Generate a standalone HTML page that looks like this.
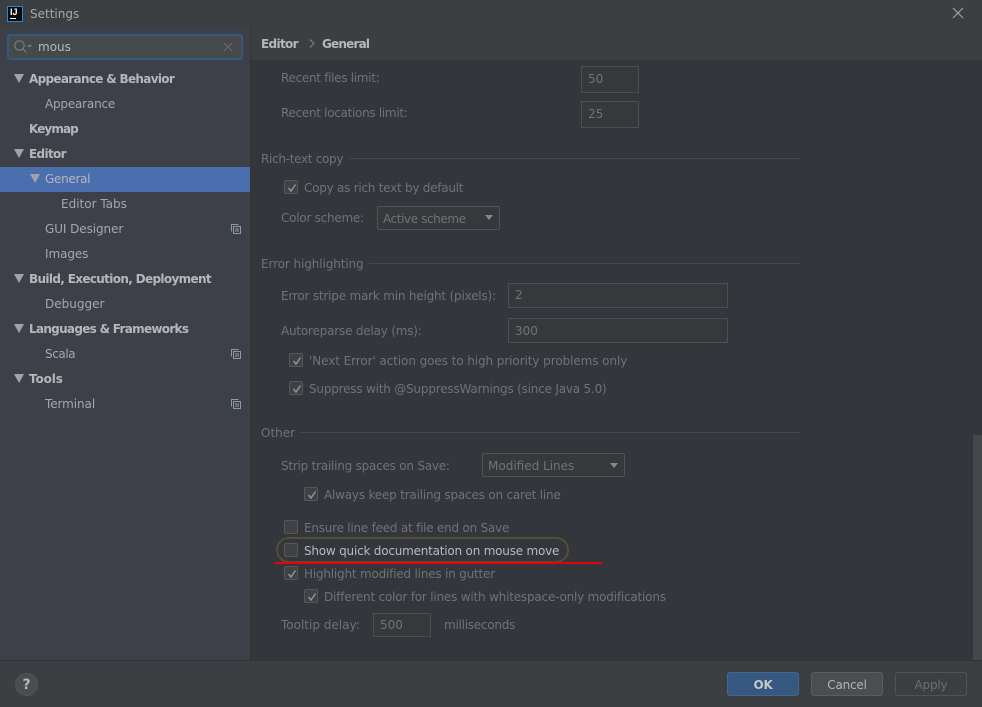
<!DOCTYPE html>
<html><head><meta charset="utf-8"><style>
html,body{margin:0;padding:0;background:#33363a;}
#r{position:relative;width:982px;height:707px;overflow:hidden;background:#33363a;font-family:"DejaVu Sans","Liberation Sans",sans-serif;font-size:12px;color:#6f7376;letter-spacing:-0.2px;}
#r div{position:absolute;box-sizing:border-box;}
.t{white-space:nowrap;line-height:20px;height:20px;}
.s{color:#a3a8ab;letter-spacing:-0.08px;}
.b{font-weight:bold;color:#b4b8bb;letter-spacing:-0.65px;}
.l{height:1px;background:#43464a;}
.i{background:#36393c;border:1px solid #4c4f52;color:#6f7376;line-height:24px;padding-left:6px;height:27px;letter-spacing:0;}
.c{width:14px;height:14px;border:1px solid #55585a;border-radius:2px;background:#3f4245;}
.c svg{position:absolute;left:1px;top:1px;}
.d{border:1px solid #505356;border-radius:2px;background:#36393c;height:24px;line-height:24px;padding-left:5px;color:#6f7376;}
.a{width:0;height:0;border-left:5px solid transparent;border-right:5px solid transparent;border-top:9px solid #a0a3a6;}
</style></head><body><div id="r">
<div style="left:0;top:0;width:982px;height:27px;background:#3c3f41"></div>
<div style="left:251px;top:27px;width:731px;height:33px;background:#3c3f41"></div>
<div style="left:0;top:27px;width:250px;height:633px;background:#3d4049"></div>
<div style="left:250px;top:60px;width:1px;height:600px;background:#313335"></div>
<div style="left:0;top:660px;width:982px;height:47px;background:#3c3f41;border-top:1px solid #323232"></div>

<div style="left:7px;top:6px;width:16px;height:16px;background:#0b0b0b;border:1px solid #1e88e5"></div>
<div class="t" style="left:10px;top:6px;font-size:9px;font-weight:bold;color:#fff;line-height:12px;height:12px;letter-spacing:0;font-family:'Liberation Sans',sans-serif">IJ</div>
<div style="left:10px;top:18px;width:6px;height:1px;background:#fff"></div>
<div class="t" style="left:30px;top:4px;color:#a3a8ab;letter-spacing:0">Settings</div>
<svg style="position:absolute;left:952px;top:7px" width="12" height="12"><path d="M1 1L11 11M11 1L1 11" stroke="#a3a8ab" stroke-width="1.1" fill="none"/></svg>

<div style="left:7px;top:34px;width:236px;height:26px;background:#46494b;border:2px solid #35587e;border-radius:3px"></div>
<svg style="position:absolute;left:13px;top:39px" width="20" height="15"><circle cx="6.5" cy="6.5" r="4.7" stroke="#7b7e81" stroke-width="1.1" fill="none"/><path d="M10 10L13.5 13.5" stroke="#7b7e81" stroke-width="1.2"/><path d="M14 6h5l-2.500 2.500z" fill="#7b7e81"/></svg>
<div class="t" style="left:38px;top:37px;color:#b4b8bb;letter-spacing:0">mous</div>
<svg style="position:absolute;left:223px;top:42px" width="10" height="10"><path d="M1 1L9 9M9 1L1 9" stroke="#686b6e" stroke-width="1.1"/></svg>

<div style="left:0;top:167px;width:250px;height:25px;background:#4b6eaf"></div>
<div class="a" style="left:14px;top:74px"></div>
<div class="t b" style="left:29px;top:69px;letter-spacing:-0.68px">Appearance &amp; Behavior</div>
<div class="t s" style="left:45px;top:94px;letter-spacing:-0.2px">Appearance</div>
<div class="t b" style="left:29px;top:119px;letter-spacing:-0.9px">Keymap</div>
<div class="a" style="left:14px;top:149px"></div>
<div class="t b" style="left:29px;top:144px">Editor</div>
<div class="a" style="left:30px;top:174px"></div>
<div class="t s" style="left:45px;top:169px;color:#b4b8bb;letter-spacing:-0.3px">General</div>
<div class="t s" style="left:61px;top:194px;letter-spacing:0">Editor Tabs</div>
<div class="t s" style="left:45px;top:219px">GUI Designer</div>
<div class="t s" style="left:45px;top:244px">Images</div>
<div class="a" style="left:14px;top:274px"></div>
<div class="t b" style="left:29px;top:269px">Build, Execution, Deployment</div>
<div class="t s" style="left:45px;top:294px;letter-spacing:0">Debugger</div>
<div class="a" style="left:14px;top:324px"></div>
<div class="t b" style="left:29px;top:319px;letter-spacing:-0.7px">Languages &amp; Frameworks</div>
<div class="t s" style="left:45px;top:344px;letter-spacing:-0.4px">Scala</div>
<div class="a" style="left:14px;top:374px"></div>
<div class="t b" style="left:29px;top:369px;letter-spacing:-0.1px">Tools</div>
<div class="t s" style="left:45px;top:394px">Terminal</div>
<svg style="position:absolute;left:231px;top:224px" width="10" height="10"><path d="M.5 7.500V.5H7.500M2.500 2.500H9.500V9.500H2.500ZM4 5H8M4 7H8" stroke="#8d9aa6" fill="none"/></svg>
<svg style="position:absolute;left:231px;top:349px" width="10" height="10"><path d="M.5 7.500V.5H7.500M2.500 2.500H9.500V9.500H2.500ZM4 5H8M4 7H8" stroke="#8d9aa6" fill="none"/></svg>
<svg style="position:absolute;left:231px;top:399px" width="10" height="10"><path d="M.5 7.500V.5H7.500M2.500 2.500H9.500V9.500H2.500ZM4 5H8M4 7H8" stroke="#8d9aa6" fill="none"/></svg>

<div class="t b" style="left:261px;top:34px">Editor</div>
<svg style="position:absolute;left:309px;top:39px" width="6" height="9"><path d="M1 .5L5 4.500L1 8.500" stroke="#85888b" fill="none"/></svg>
<div class="t b" style="left:322px;top:34px;letter-spacing:-0.8px">General</div>

<div class="t" style="left:281px;top:68px;letter-spacing:-0.3px">Recent files limit:</div>
<div class="i" style="left:581px;top:66px;width:58px">50</div>
<div class="t" style="left:281px;top:103px;letter-spacing:-0.3px">Recent locations limit:</div>
<div class="i" style="left:581px;top:101px;width:58px">25</div>

<div class="t" style="left:261px;top:149px;letter-spacing:-0.3px">Rich-text copy</div>
<div class="l" style="left:349px;top:158px;width:451px"></div>
<div class="c" style="left:284px;top:180px"><svg width="12" height="12"><path d="M2.500 6L5 9L9.500 2.500" stroke="#909396" stroke-width="1.500" fill="none"/></svg></div>
<div class="t" style="left:304px;top:178px;letter-spacing:-0.25px">Copy as rich text by default</div>
<div class="t" style="left:281px;top:208px;letter-spacing:-0.25px">Color scheme:</div>
<div class="d" style="left:377px;top:206px;width:123px;letter-spacing:-0.4px">Active scheme</div>
<svg style="position:absolute;left:484px;top:215px" width="10" height="6"><path d="M1 0H9L5 5z" fill="#85888b"/></svg>

<div class="t" style="left:261px;top:254px;letter-spacing:-0.1px">Error highlighting</div>
<div class="l" style="left:369px;top:263px;width:431px"></div>
<div class="t" style="left:281px;top:286px">Error stripe mark min height (pixels):</div>
<div class="i" style="left:508px;top:283px;width:220px;height:25px;line-height:23px">2</div>
<div class="t" style="left:281px;top:321px">Autoreparse delay (ms):</div>
<div class="i" style="left:508px;top:318px;width:220px;height:25px;line-height:24px">300</div>
<div class="c" style="left:289px;top:353px"><svg width="12" height="12"><path d="M2.500 6L5 9L9.500 2.500" stroke="#909396" stroke-width="1.500" fill="none"/></svg></div>
<div class="t" style="left:309px;top:351px;letter-spacing:-0.08px">'Next Error' action goes to high priority problems only</div>
<div class="c" style="left:289px;top:381px"><svg width="12" height="12"><path d="M2.500 6L5 9L9.500 2.500" stroke="#909396" stroke-width="1.500" fill="none"/></svg></div>
<div class="t" style="left:309px;top:379px">Suppress with @SuppressWarnings (since Java 5.0)</div>

<div class="t" style="left:261px;top:423px;letter-spacing:0">Other</div>
<div class="l" style="left:300px;top:432px;width:500px"></div>
<div class="t" style="left:281px;top:456px;letter-spacing:-0.23px">Strip trailing spaces on Save:</div>
<div class="d" style="left:482px;top:453px;width:143px;letter-spacing:0">Modified Lines</div>
<svg style="position:absolute;left:609px;top:463px" width="10" height="6"><path d="M1 0H9L5 5z" fill="#85888b"/></svg>
<div class="c" style="left:304px;top:487px"><svg width="12" height="12"><path d="M2.500 6L5 9L9.500 2.500" stroke="#909396" stroke-width="1.500" fill="none"/></svg></div>
<div class="t" style="left:324px;top:485px">Always keep trailing spaces on caret line</div>

<div class="c" style="left:284px;top:520px"></div>
<div class="t" style="left:304px;top:518px;letter-spacing:-0.23px">Ensure line feed at file end on Save</div>
<div style="left:276px;top:537px;width:293px;height:26px;border:2px solid #574d37;border-radius:13px"></div>
<div class="c" style="left:284px;top:543px"></div>
<div class="t" style="left:304px;top:541px;color:#b8bbbd;letter-spacing:-0.21px">Show quick documentation on mouse move</div>
<div style="left:275px;top:562px;width:327px;height:2px;background:#e8000c"></div>
<div class="c" style="left:284px;top:566px"><svg width="12" height="12"><path d="M2.500 6L5 9L9.500 2.500" stroke="#909396" stroke-width="1.500" fill="none"/></svg></div>
<div class="t" style="left:304px;top:564px">Highlight modified lines in gutter</div>
<div class="c" style="left:304px;top:589px"><svg width="12" height="12"><path d="M2.500 6L5 9L9.500 2.500" stroke="#909396" stroke-width="1.500" fill="none"/></svg></div>
<div class="t" style="left:324px;top:587px">Different color for lines with whitespace-only modifications</div>
<div class="t" style="left:281px;top:615px;letter-spacing:0">Tooltip delay:</div>
<div class="i" style="left:373px;top:613px;width:58px;height:24px;line-height:22px">500</div>
<div class="t" style="left:444px;top:615px;letter-spacing:-0.25px">milliseconds</div>

<div style="left:973px;top:435px;width:9px;height:225px;background:#45484a"></div>

<div style="left:15px;top:673px;width:23px;height:23px;border-radius:50%;background:#4a4d4f;border:1px solid #515456;color:#b4b8bb;font-weight:bold;font-size:14px;line-height:23px;text-align:center">?</div>
<div style="left:727px;top:672px;width:72px;height:24px;background:#365880;border:1px solid #43688f;border-radius:3px;color:#c4c8cb;font-weight:bold;text-align:center;line-height:25px">OK</div>
<div style="left:811px;top:672px;width:72px;height:24px;background:#4b4e50;border:1px solid #5b5e60;border-radius:3px;color:#b0b4b7;text-align:center;line-height:25px">Cancel</div>
<div style="left:895px;top:672px;width:72px;height:24px;background:#3c3f41;border:1px solid #505356;border-radius:3px;color:#6a6d70;text-align:center;line-height:25px">Apply</div>
</div></body></html>
